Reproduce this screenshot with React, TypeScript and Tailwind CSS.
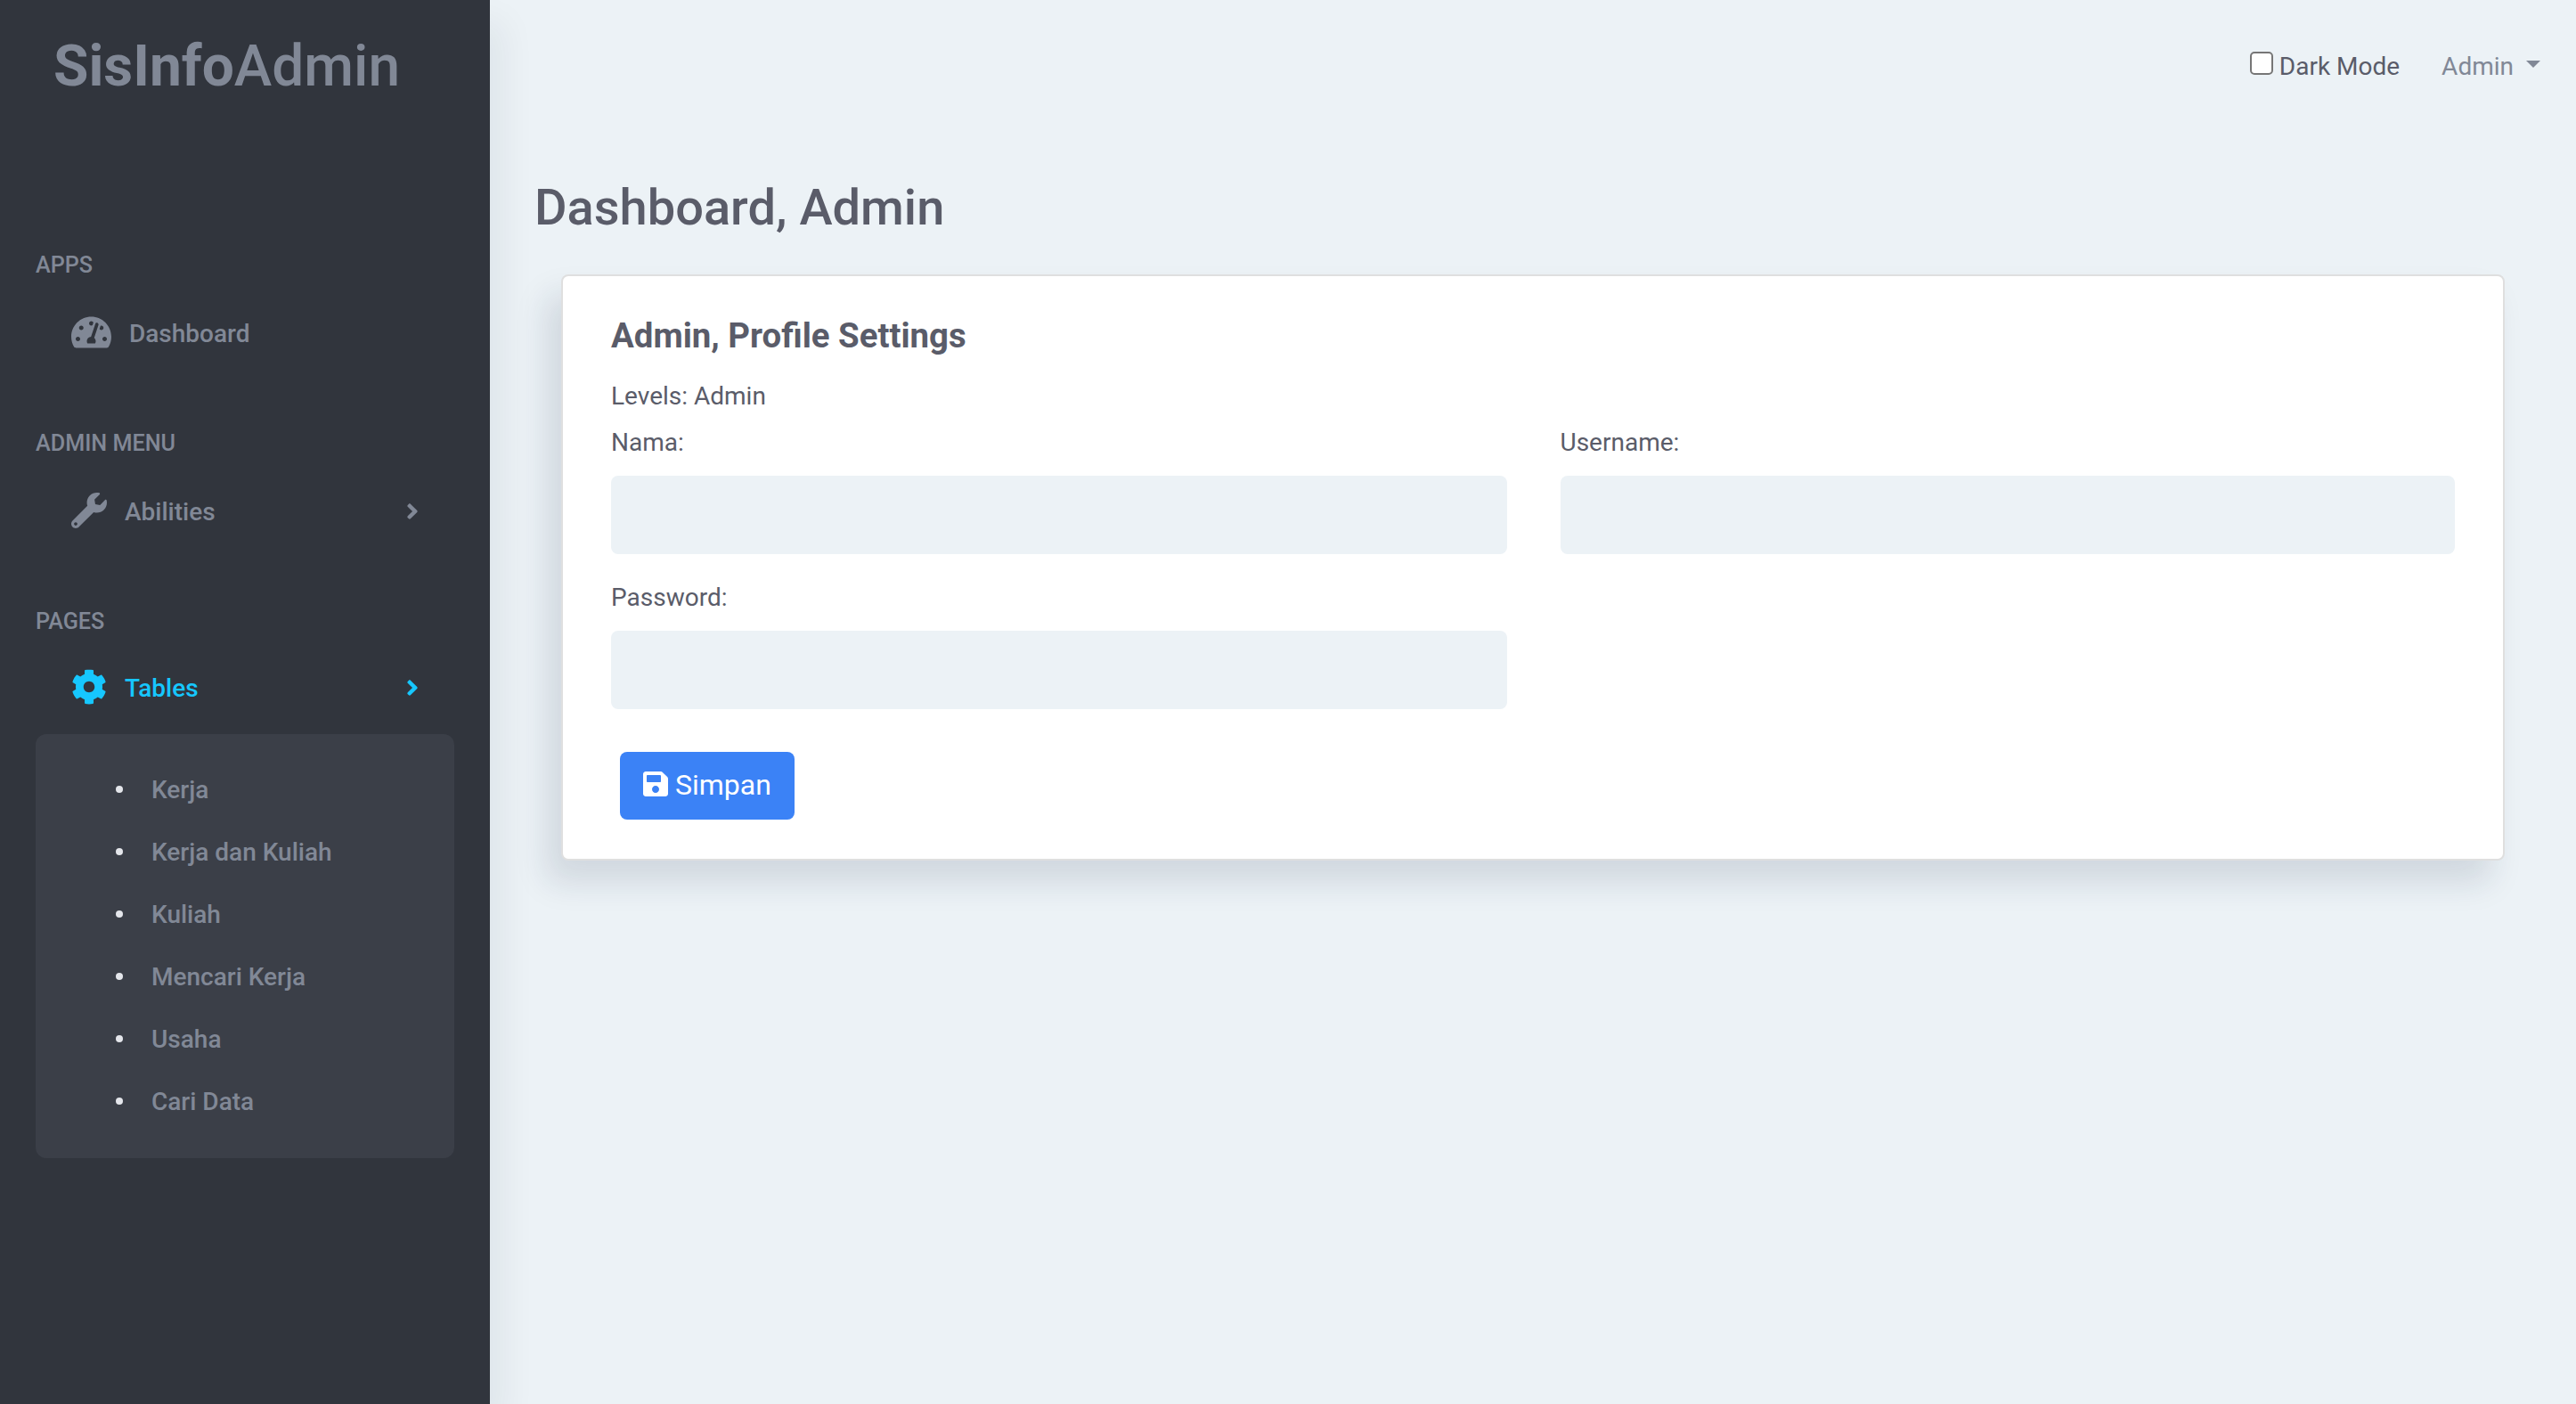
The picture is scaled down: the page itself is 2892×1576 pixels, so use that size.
import { FaTachometerAlt, FaWrench, FaCog, FaAngleRight, FaSave } from "react-icons/fa";
import type { ReactNode } from "react";

const tables = [
  "Kerja",
  "Kerja dan Kuliah",
  "Kuliah",
  "Mencari Kerja",
  "Usaha",
  "Cari Data",
];

function MenuHeader({ children }: { children: ReactNode }) {
  return (
    <h6 className="pl-[40px] text-[25.2px] leading-[29px] font-medium uppercase">
      {children}
    </h6>
  );
}

function Field({ label, type = "text" }: { label: string; type?: string }) {
  return (
    <label className="block">
      <span className="block text-[28px] leading-[33px]">{label}</span>
      <input
        type={type}
        className="mt-[21px] block h-[88px] w-full rounded-[8px] bg-[#ecf2f6] px-6 outline-none"
      />
    </label>
  );
}

function Sidebar() {
  return (
    <nav className="h-full w-[550px] shrink-0 bg-[#31353d] text-[#818896] shadow-[16px_24px_36px_0_rgba(25,35,50,0.06)]">
      <h2 className="pt-[37px] pl-[60px] text-[64px] leading-[75px] font-medium">
        <b className="font-bold">SisInfo</b>Admin
      </h2>

      <div className="mt-[171px]">
        <MenuHeader>Apps</MenuHeader>
        <a className="mt-[27px] flex h-[71px] items-center pl-[80px] text-[28px] leading-[33px] font-medium">
          <FaTachometerAlt className="-mt-[3px] h-[40px] w-[45px]" />
          <span className="ml-[20px]">Dashboard</span>
        </a>
      </div>

      <div className="mt-[73px]">
        <MenuHeader>Admin Menu</MenuHeader>
        <a className="mt-[27px] flex h-[71px] items-center px-[80px] text-[28px] leading-[33px] font-medium">
          <FaWrench className="-mt-[3px] h-[40px] w-[40px]" />
          <span className="ml-[20px]">Abilities</span>
          <FaAngleRight className="-mt-px ml-auto h-[28px] w-[14px]" />
        </a>
      </div>

      <div className="mt-[73px]">
        <MenuHeader>Pages</MenuHeader>
        <a className="mt-[25px] flex h-[71px] items-center px-[80px] text-[28px] leading-[33px] font-medium text-[#16c7ff]">
          <FaCog className="-mt-[3px] h-[40px] w-[40px]" />
          <span className="ml-[20px]">Tables</span>
          <FaAngleRight className="-mt-px ml-auto h-[28px] w-[14px]" />
        </a>
        <ul className="mx-[40px] mt-[16px] rounded-[12px] bg-[#3b3f48] pt-[27px] pb-[29px] text-[28px] leading-[33px] font-medium">
          {tables.map((name) => (
            <li key={name} className="flex h-[70px] items-center pl-[90px]">
              <span className="h-[8px] w-[8px] rounded-full bg-[#e4e6eb]" />
              <span className="ml-[32px] pt-px">{name}</span>
            </li>
          ))}
        </ul>
      </div>
    </nav>
  );
}

function Topbar() {
  return (
    <header className="flex h-[148px] items-start justify-end pt-[58px] pr-[40px] text-[28px] leading-[33px]">
      <label className="flex">
        <input
          type="checkbox"
          className="h-[26px] w-[26px] appearance-none rounded-[5px] border-2 border-[#767676] bg-white"
        />
        <span className="ml-[7px]">Dark Mode</span>
      </label>
      <a className="ml-[47px] flex text-[#818896]">
        Admin
        <svg viewBox="0 0 16 8" className="mt-[10px] ml-[14px] h-[8px] w-[16px]">
          <path d="M0 0h16L8 8z" fill="currentColor" />
        </svg>
      </a>
    </header>
  );
}

export default function App() {
  return (
    <div className="flex h-[1576px] w-[2892px] overflow-hidden bg-[#ecf2f6] font-['Roboto',sans-serif] text-[#5a5c69]">
      <Sidebar />
      <div className="flex-1">
        <Topbar />
        <main className="pr-[80px] pl-[50px]">
          <h1 className="mt-[51px] h-[68px] text-[56px] leading-[68px] font-medium">
            Dashboard, Admin
          </h1>
          <section className="mt-[41px] ml-[30px] h-[658px] rounded-[8px] border-2 border-[#dfdfdf] bg-white pt-[44px] pl-[54px] shadow-[-16px_24px_36px_0_rgba(25,42,70,0.13)]">
            <h4 className="text-[38.4px] leading-[45px] font-bold">
              Admin, Profile Settings
            </h4>
            <p className="mt-[29px] text-[28px] leading-[33px]">Levels: Admin</p>
            <form className="mt-[19px]">
              <div className="grid grid-cols-[1005.5px_1004.5px] gap-x-[60px] gap-y-[32px]">
                <Field label="Nama:" />
                <Field label="Username:" />
                <Field label="Password:" type="password" />
              </div>
              <button
                type="button"
                className="mt-[48px] ml-[10px] flex h-[76px] w-[196px] items-center rounded-[8px] bg-[#3b82f6] pb-[2px] pl-[26px] text-[32px] leading-[38px] text-white"
              >
                <FaSave className="-mt-[2px] h-[32px] w-[28px]" />
                <span className="ml-[8px]">Simpan</span>
              </button>
            </form>
          </section>
        </main>
      </div>
    </div>
  );
}
